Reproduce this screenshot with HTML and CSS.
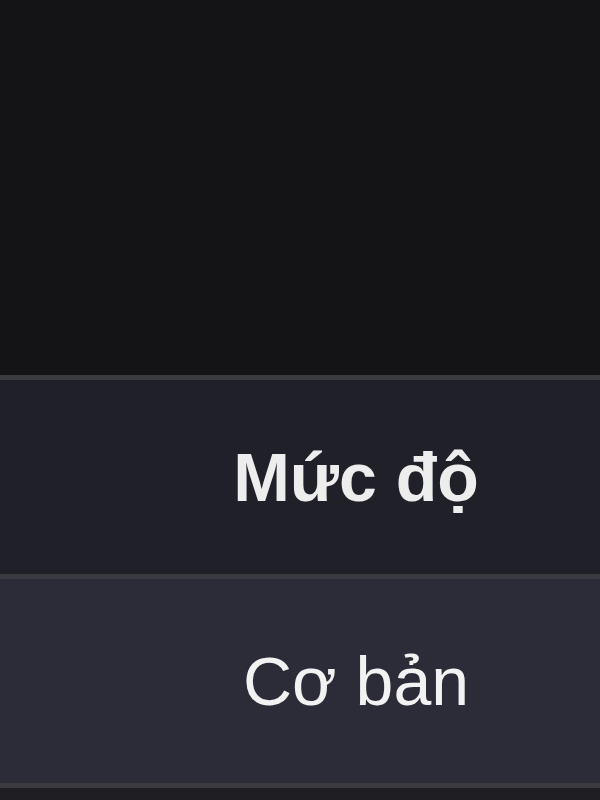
FILE: index.html
```
<!DOCTYPE html>
<html lang="vi">
<head>
  <meta charset="UTF-8">
  <meta name="viewport" content="width=device-width, initial-scale=1.0">
  <title>Mức độ</title>
  <link rel="stylesheet" href="styles.css">
</head>
<body>

<div class="page">
  <div class="top-area"></div>

  <div class="table">
    <div class="row header-row">
      <div class="cell spacer"></div>
      <div class="cell head">Mức độ</div>
    </div>
    <div class="row body-row">
      <div class="cell spacer"></div>
      <div class="cell">Cơ bản</div>
    </div>
  </div>

  <div class="bottom-area"></div>
</div>

</body>
</html>
```

FILE: styles.css
```
/* Global */
body {
  margin: 0;
  background-color: #1f1f23;
  font-family: 'Liberation Sans', Arial, sans-serif;
  color: #f2f2f2;
}

.page {
  width: 600px;
  height: 800px;
  display: flex;
  flex-direction: column;
  overflow: hidden;
}

.top-area {
  height: 375px;
  background-color: #141417;
  flex-shrink: 0;
}

.table {
  display: flex;
  flex-direction: column;
  flex-shrink: 0;
}

.row {
  display: grid;
  grid-template-columns: 112px 1fr;
  border-top: 5px solid #3a3a3f;
}

.header-row {
  height: 194px;
  background-color: #202128;
}

.body-row {
  height: 204px;
  background-color: #2c2c38;
  border-bottom: 5px solid #3a3a3f;
}

.cell {
  display: flex;
  align-items: center;
  justify-content: center;
  font-size: 68px;
  line-height: 1;
}

.head {
  font-weight: bold;
  color: #ededed;
}

.bottom-area {
  flex: 1;
  background-color: #1f1f23;
}
```
